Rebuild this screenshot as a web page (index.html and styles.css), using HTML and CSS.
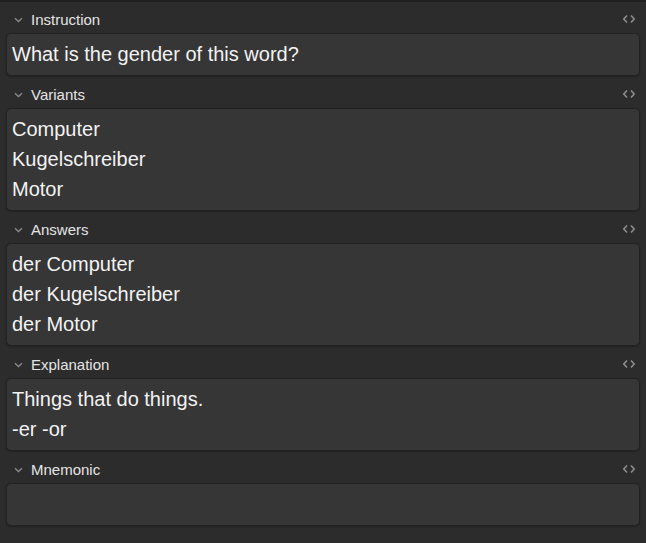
FILE: index.html
```html
<!DOCTYPE html>
<html>
<head>
<meta charset="utf-8">
<link rel="stylesheet" href="styles.css">
</head>
<body>
<div class="editor">
  <div class="field">
    <div class="label-row">
      <span class="chev"><svg width="9" height="6" viewBox="0 0 9 6"><path d="M1 1.2 L4.5 4.5 L8 1.2" fill="none" stroke="currentColor" stroke-width="1.4"/></svg></span>
      <span class="label">Instruction</span>
      <span class="code"><svg width="14" height="10" viewBox="0 0 14 10"><path d="M5 1.5 L1.8 5 L5 8.5 M9 1.5 L12.2 5 L9 8.5" fill="none" stroke="currentColor" stroke-width="1.6"/></svg></span>
    </div>
    <div class="box"><div class="line">What is the gender of this word?</div></div>
  </div>
  <div class="field">
    <div class="label-row">
      <span class="chev"><svg width="9" height="6" viewBox="0 0 9 6"><path d="M1 1.2 L4.5 4.5 L8 1.2" fill="none" stroke="currentColor" stroke-width="1.4"/></svg></span>
      <span class="label">Variants</span>
      <span class="code"><svg width="14" height="10" viewBox="0 0 14 10"><path d="M5 1.5 L1.8 5 L5 8.5 M9 1.5 L12.2 5 L9 8.5" fill="none" stroke="currentColor" stroke-width="1.6"/></svg></span>
    </div>
    <div class="box"><div class="line">Computer</div><div class="line">Kugelschreiber</div><div class="line">Motor</div></div>
  </div>
  <div class="field">
    <div class="label-row">
      <span class="chev"><svg width="9" height="6" viewBox="0 0 9 6"><path d="M1 1.2 L4.5 4.5 L8 1.2" fill="none" stroke="currentColor" stroke-width="1.4"/></svg></span>
      <span class="label">Answers</span>
      <span class="code"><svg width="14" height="10" viewBox="0 0 14 10"><path d="M5 1.5 L1.8 5 L5 8.5 M9 1.5 L12.2 5 L9 8.5" fill="none" stroke="currentColor" stroke-width="1.6"/></svg></span>
    </div>
    <div class="box"><div class="line">der Computer</div><div class="line">der Kugelschreiber</div><div class="line">der Motor</div></div>
  </div>
  <div class="field">
    <div class="label-row">
      <span class="chev"><svg width="9" height="6" viewBox="0 0 9 6"><path d="M1 1.2 L4.5 4.5 L8 1.2" fill="none" stroke="currentColor" stroke-width="1.4"/></svg></span>
      <span class="label">Explanation</span>
      <span class="code"><svg width="14" height="10" viewBox="0 0 14 10"><path d="M5 1.5 L1.8 5 L5 8.5 M9 1.5 L12.2 5 L9 8.5" fill="none" stroke="currentColor" stroke-width="1.6"/></svg></span>
    </div>
    <div class="box"><div class="line">Things that do things.</div><div class="line">-er -or</div></div>
  </div>
  <div class="field">
    <div class="label-row">
      <span class="chev"><svg width="9" height="6" viewBox="0 0 9 6"><path d="M1 1.2 L4.5 4.5 L8 1.2" fill="none" stroke="currentColor" stroke-width="1.4"/></svg></span>
      <span class="label">Mnemonic</span>
      <span class="code"><svg width="14" height="10" viewBox="0 0 14 10"><path d="M5 1.5 L1.8 5 L5 8.5 M9 1.5 L12.2 5 L9 8.5" fill="none" stroke="currentColor" stroke-width="1.6"/></svg></span>
    </div>
    <div class="box"><div class="line">&nbsp;</div></div>
  </div>
</div>
</body>
</html>
```
FILE: styles.css
```css
html, body {
  margin: 0;
  padding: 0;
  background: #2c2c2c;
  height: 100%;
}
body {
  font-family: "Liberation Sans", Arial, sans-serif;
  color: #f2f2f2;
}
.editor {
  border-top: 2px solid #1f1f1f;
  padding: 5px 6px 0 6px;
  display: flex;
  flex-direction: column;
  gap: 6px;
}
.label-row {
  height: 24px;
  display: flex;
  align-items: center;
  margin-bottom: 2px;
}
.chev {
  width: 25px;
  display: flex;
  justify-content: center;
  color: #8a8a8a;
  margin-top: 2px;
}
.label {
  font-size: 15px;
  color: #e4e4e4;
  flex: 1;
}
.code {
  color: #8c8c8c;
  display: flex;
  margin-right: 4px;
}
.box {
  background: #363636;
  border: 1px solid #222222;
  border-radius: 5px;
  padding: 5px 5px 6px 5px;
  font-size: 20px;
  line-height: 30px;
  box-shadow: 0 1px 2px rgba(0,0,0,0.25);
}
```
